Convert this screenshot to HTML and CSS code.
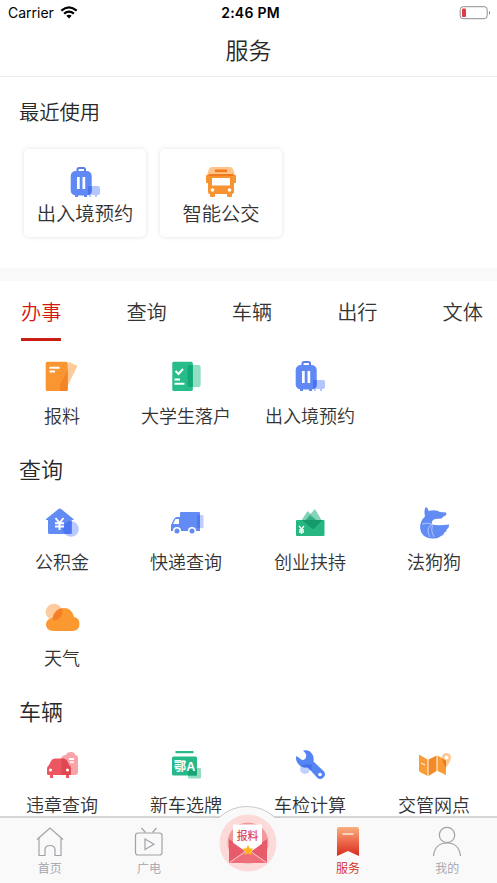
FILE: index.html
```html
<!DOCTYPE html>
<html lang="zh-CN">
<head>
<meta charset="utf-8">
<title>服务</title>
<link rel="stylesheet" href="styles.css">
</head>
<body>
<svg class="defs" width="0" height="0">
  <symbol id="luggage" viewBox="0 0 32 32">
    <rect x="17" y="20" width="14" height="9" rx="2" fill="#b3c6ff"/>
    <path d="M20 28h2v3h-2zM26 28h2v3h-2z" fill="#b3c6ff"/>
    <path d="M8.500 6V3.500Q8.500 2 10 2h4.500Q16 2 16 3.500V6" fill="none" stroke="#5b7fe8" stroke-width="2"/>
    <rect x="1.700" y="5" width="21" height="24.500" rx="5" fill="#6189f5"/>
    <path d="M6 28h3v3H6zM15 28h3v3h-3z" fill="#6189f5"/>
    <path d="M19 21q0-1 1-1h2.700v5q0 3-3.700 4z" fill="#4a72ec"/>
    <path d="M8 11h2.700v12H8zM13.500 11h2.700v12h-2.700z" fill="#fff"/>
  </symbol>
</svg>
<div class="screen">
  <header class="status">
    <div class="carrier">Carrier
      <svg width="18" height="13" viewBox="0 0 18 13" fill="none" stroke="#000" stroke-width="2.200"><path d="M1.300 4.700Q9-2 16.700 4.700M4.100 7.700q4.900-4 9.800 0"/><path d="M6.300 9.800Q9 7.700 11.700 9.800L9 12.500z" fill="#000" stroke="none"/></svg>
    </div>
    <time>2:46 PM</time>
    <svg width="32" height="14" viewBox="0 0 32 14"><rect x="1.200" y=".7" width="27" height="12" rx="3" fill="#fff" stroke="#8f8f8f"/><rect x="3" y="2.500" width="4" height="8.500" rx="1" fill="#e33b42"/><path d="M30 4.700q2 2 0 4z" fill="#777"/></svg>
  </header>
  <h1>服务</h1>

  <section class="recent">
    <h2>最近使用</h2>
    <div class="cards">
      <div class="card"><svg class="icon"><use href="#luggage"/></svg><span>出入境预约</span></div>
      <div class="card">
        <svg class="icon" viewBox="0 0 32 32">
          <path d="M7 1h18q2 0 3 2l2 6H2l2-6q1-2 3-2z" fill="#fdc38b"/>
          <path d="M10 3.500h12v2.700H10z" fill="#f07a1c"/>
          <path d="M1 10q0-1 1-1h28q1 0 1 1v7h-2v9q0 2-2 2v2q0 1-1 1h-3q-1 0-1-1v-2H10v2q0 1-1 1H6q-1 0-1-1v-2q-2 0-2-2v-9H1z" fill="#f79332"/>
          <path d="M4 8h24l1 2H3z" fill="#f07a1c"/><path d="M7 12h18v7.500H7z" fill="#fff"/>
          <circle cx="7.500" cy="24" r="1.800" fill="#fff"/><circle cx="24.500" cy="24" r="1.800" fill="#fff"/>
        </svg><span>智能公交</span></div>
    </div>
  </section>

  <nav class="tabs">
    <span class="active">办事</span><span>查询</span><span>车辆</span><span>出行</span><span>文体</span>
  </nav>

  <div class="grid first">
    <div class="item">
      <svg class="icon" viewBox="0 0 32 32">
        <path d="M23 1.700 31.500 6 19 31l-5-1z" fill="#fdcb9b"/>
        <rect x="-.3" y="1.700" width="22" height="29.300" rx="1.500" fill="#fa9632"/>
        <path d="M21.700 10v19.500q0 1.500-1.500 1.500H14q-.8-5 1.200-9z" fill="#f58428"/>
        <path d="M3.500 6.700h10v2h-10zM3.500 10.500h5.500v2H3.500z" fill="#fff"/>
      </svg><span>报料</span></div>
    <div class="item">
      <svg class="icon" viewBox="0 0 32 32">
        <rect x="16" y="5" width="14.700" height="22" rx="2" fill="#93dec5"/>
        <rect x="2.300" y="1.700" width="20.500" height="29.300" rx="1.500" fill="#26bd8b"/>
        <path d="M22.800 5v22H20q-2.500 0-2.500-3V8q0-3 2.500-3z" fill="#13a97a"/>
        <path d="m5.500 11 3 3 4.500-5" fill="none" stroke="#fff" stroke-width="2"/>
        <path d="M4.500 18.500H10v2H4.500zM4.500 22.700h10v2h-10z" fill="#fff"/>
      </svg><span>大学生落户</span></div>
    <div class="item"><svg class="icon"><use href="#luggage"/></svg><span>出入境预约</span></div>
  </div>

  <h3>查询</h3>
  <div class="grid">
    <div class="item">
      <svg class="icon" viewBox="0 0 32 32">
        <circle cx="25" cy="23" r="7.800" fill="#b8caff"/>
        <path d="M12.500 3q1.300-1 2.600 0L27.500 13v1H25.700V26.500q0 1.500-1.500 1.500H3.500Q2 28 2 26.500V14H0v-1z" fill="#628bf3"/>
        <path d="M25.700 15.200V26.500q0 1.500-1.500 1.500h-5.300a7.800 7.800 0 0 1 6.800-12.800z" fill="#4a76f2"/>
        <path d="m9.500 12 4 5 4-5M13.500 16.500V24M9 17.200h9M9 20.500h9" fill="none" stroke="#fff" stroke-width="1.900"/>
      </svg><span>公积金</span></div>
    <div class="item">
      <svg class="icon" viewBox="0 0 32 32">
        <rect x="25" y="9" width="8.500" height="13" rx="1" fill="#bccdff"/>
        <path d="M11 6h18q1 0 1 1v18H10V7q0-1 1-1zM10 11v14H1v-6l3-6q1-2 3-2z" fill="#628bf3"/>
        <path d="M27 9h3v13h-3z" fill="#4f79ee"/>
        <path d="M5.500 13H9v5H3z" fill="#fff"/>
        <g fill="#628bf3" stroke="#fff" stroke-width="1.600"><circle cx="7" cy="25" r="3.300"/><circle cx="22" cy="25" r="3.300"/></g>
      </svg><span>快递查询</span></div>
    <div class="item">
      <svg class="icon" viewBox="0 0 32 32">
        <path d="m7 15 6.500-10L25 16z" fill="#84d3b7"/><path d="M10 15 21 3l7 12z" fill="#68c9a8" opacity=".8"/><path d="m11 15 5-6 7 6z" fill="#3aac85"/>
        <rect x="2" y="14" width="28.500" height="16" rx="1" fill="#26b681"/>
        <path d="M8 14h20.500l-8.500 8.500q-1 1-2 0l-7-6z" fill="#159a6b"/>
        <path d="m5 20 2.500 3 2.500-3M7.500 22.500V28M5 24h5M5 26h5" stroke="#fff" stroke-width="1.300" fill="none"/>
      </svg><span>创业扶持</span></div>
    <div class="item">
      <svg class="icon" viewBox="0 0 32 32">
        <path d="M8 1Q10 2 10.500 5Q18 3 22 6L28 6.500Q29 8 27.500 9.500Q25.500 10 23.500 12.500L17 13Q13 14.500 14 18.500Q20 20 31.300 18.500Q31 22 28.500 23.500Q29 25.500 26.500 26.500Q26 29 23 30Q20 33 14 32.500Q6 32 3 26Q0 17 7 10.500Q5.500 4 8 1z" fill="#628bf3"/>
        <path d="M4 18q6-2 10 .5M14 18.500q-7 4-2 12.500M15 19.500q-3 4 1 11.500" fill="none" stroke="#c5d4ff" stroke-width=".8"/>
      </svg><span>法狗狗</span></div>
    <div class="item">
      <svg class="icon" viewBox="0 0 32 32">
        <circle cx="8" cy="10" r="8.300" fill="#fdcb9e"/>
        <path d="M7 29Q0 28 0 22.500T6.500 16Q9 6 17.500 6 26 6 28 15q5.500 1 5.500 7T27 29z" fill="#fb982f"/>
        <path d="M6.500 16Q8.500 7.800 16 6.200q1.500 6-2.500 10-3 2.500-6.500 2z" fill="#f57f29"/>
      </svg><span>天气</span></div>
  </div>

  <h3 class="vehicle">车辆</h3>
  <div class="grid">
    <div class="item">
      <svg class="icon" viewBox="0 0 32 32">
        <path d="M15 10q1-4 5-4 1-3 5-3t4 3q3 0 3 3v14q0 3-3 3H15z" fill="#f8a3a8"/>
        <path d="M5 12q1-2.500 4-2.500h8q3 0 4 2.500l2 4q2 1 2 4v5q0 1-1 1h-1v3h-3v-3H7v3H4v-3H2q-1 0-1-1v-5q0-3 2-4z" fill="#ec5660"/>
        <path d="M15.500 9.500H17q3 0 4 2.500l2 4q2 1 2 4v5q0 1-1 1h-8.500z" fill="#df4752"/>
        <circle cx="4.500" cy="21" r="1.500" fill="#fff"/><circle cx="21.500" cy="21" r="1.500" fill="#fff"/>
        <path d="M23 9h5v2h-5zM24 12.500h4V14h-4z" fill="#fff"/>
      </svg><span>违章查询</span></div>
    <div class="item">
      <svg class="icon" viewBox="0 0 32 32">
        <rect x="18" y="19" width="13" height="10.500" rx="1" fill="#92dcc4"/>
        <rect x="2" y="7.500" width="25" height="19" rx="1.500" fill="#28b98a"/><path d="M5.500 2h18v2.200h-18z" fill="#28b98a"/>
        <path d="M18 20h9v6.500h-9z" fill="#17a578"/>
        <text x="14.600" y="22" text-anchor="middle" class="plate">鄂A</text>
      </svg><span>新车选牌</span></div>
    <div class="item">
      <svg class="icon" viewBox="0 0 32 32">
        <circle cx="11" cy="20" r="5" fill="#c2d0ff"/>
        <path d="M9 1.500q7-1.500 10 5 1 3 .5 6l10 9.500q3 3 0 6.500-3.500 3-6.500 0L13.500 18Q6 20 2.500 12q-1-3 0-5l5.500 4q5 0 4-6z" fill="#5584f5"/>
        <path d="M7 17q4-3 11-1l-1 5.500-3.500-3Q10 19 7 17z" fill="#426fec"/>
        <circle cx="26" cy="25.500" r="1.800" fill="#fff"/>
      </svg><span>车检计算</span></div>
    <div class="item">
      <svg class="icon" viewBox="0 0 32 32">
        <path d="M28.500 4a4.500 4.500 0 0 0-4.500 4.500Q24 12 28.500 18 33 12 33 8.500A4.500 4.500 0 0 0 28.500 4zm0 2.500a2 2 0 1 1 0 4 2 2 0 0 1 0-4z" fill="#fdc78f"/>
        <path d="m1 5.500 8.500 5V27L2 23q-1-.5-1-2z" fill="#fa9c36"/><path d="m10.500 10.500 8-4V22l-8 5z" fill="#f68927"/><path d="m19.500 6.500 8.500 5V26l-8.500-4z" fill="#fa9c36"/>
        <path d="m24 9.500 4 2.500v7q-3-4-4-9.500z" fill="#ee7820"/>
        <path d="m3 14 4 2" stroke="#fff"/>
      </svg><span>交管网点</span></div>
  </div>

  <footer class="bar">
    <div class="tab"><svg class="tabicon" viewBox="0 0 32 32"><path d="M3 13.500 16 2l13 11.500M5 12v17.500h6V24q0-4.500 5-4.500t5 4.500v5.500h6V12"/></svg>首页</div>
    <div class="tab"><svg class="tabicon" viewBox="0 0 32 32"><rect x="2.500" y="7" width="26.500" height="22" rx="2.500"/><path d="m8.500 2 4 4.500M23.500 2l-4 4.500M12 13v10.500l9-5.200z"/></svg>广电</div>
    <div class="tab center">
      <svg class="report" viewBox="0 0 90 77">
        <path d="M16 11.500Q28 .5 44 .5T72 11.500V77H16z" fill="#f9f9f9"/><path d="M10 11.500h6Q28 .5 44 .5t28 11h6" fill="none" stroke="#c9c9c9"/>
        <circle cx="45" cy="37" r="28.500" fill="#fcdad9"/><circle cx="45" cy="37" r="20.500" fill="#f0999b"/>
        <path d="m26 33 19 13 19-13v24H26z" fill="#e75b6b"/>
        <path d="M30 18.500h29v20L45 48l-15-9z" fill="#fff"/>
        <path d="m26 57 19-13 19 13z" fill="#ee6e7a"/><path d="M26 34v23l16-12zM64 34v23L49 45z" fill="#e75b6b"/>
        <path d="m26.500 56.500 16-11M63.500 56.500l-16-11" stroke="#ffd0d1"/>
        <path d="m45 39 1.700 3.300 3.800.5-2.700 2.600.6 3.700-3.400-1.700-3.400 1.700.6-3.700-2.700-2.600 3.800-.5z" fill="#ffb51d"/>
        <text x="44.500" y="34" text-anchor="middle" class="reporttext">报料</text>
      </svg>
    </div>
    <div class="tab selected"><svg class="tabicon" viewBox="0 0 32 32"><defs><linearGradient id="red" x2="0" y2="1"><stop stop-color="#f9b07d"/><stop offset=".5" stop-color="#ed694b"/><stop offset="1" stop-color="#d82b20"/></linearGradient></defs><path d="M5 3q0-2 2-2h18q2 0 2 2v27L16 25 5 30z" fill="url(#red)" stroke="none"/><path d="M10.500 8h11" stroke="#fff"/></svg>服务</div>
    <div class="tab"><svg class="tabicon" viewBox="0 0 32 32"><circle cx="16" cy="9" r="7.700"/><path d="M2.500 30Q4 17 16 17t13.500 13"/></svg>我的</div>
  </footer>
</div>
</body>
</html>
```
FILE: styles.css
```css
* { box-sizing: border-box; }
body { margin: 0; background: #fff; color: #333; font-family: Inter, "Noto Sans CJK SC", sans-serif; font-weight: 350; }
.defs { display: none; }
.screen { width: 497px; height: 883px; overflow: hidden; display: flex; flex-direction: column; position: relative; }
.screen > * { flex-shrink: 0; }
.status { height: 26px; padding: 0 6px 0 8px; display: grid; grid-template-columns: 1fr auto 1fr; align-items: center; color: #000; font-size: 14px; }
.carrier { display: flex; align-items: center; gap: 6px; font-size: 14px; font-weight: 400; line-height: 26px; }
.carrier svg { margin-bottom: 2px; }
.status time { font-weight: 600; padding-left: 2px; letter-spacing: .25px; line-height: 26px; }
.status > svg { justify-self: end; margin-bottom: 1px; }
h1, h2, h3 { margin: 0; font-weight: 350; color: #282828; }
h1 { height: 51px; border-bottom: 1px solid #ececec; text-align: center; font-size: 23px; line-height: 51px; }
.recent { height: 204px; border-bottom: 13px solid #f9f9f9; padding: 18px 0 0 19px; }
h2 { font-size: 20.300px; line-height: 36px; }
.cards { display: flex; gap: 14px; padding: 18px 0 0 5px; }
.card { width: 122px; height: 88px; border-radius: 5px; box-shadow: 0 0 5px rgba(0,0,0,.12); display: flex; flex-direction: column; align-items: center; padding-top: 17px; font-size: 19.300px; line-height: 33px; }
.icon { width: 32px; height: 32px; overflow: visible; display: block; }
.tabs { height: 61px; display: flex; justify-content: space-between; padding: 0 14px 0 21px; font-size: 20.200px; line-height: 63px; }
.tabs span { height: 60px; }
.tabs .active { color: #d4180f; border-bottom: 3px solid #ca1d14; }
.grid { width: 496px; display: grid; grid-template-columns: repeat(4, 124px); grid-auto-rows: 96px; }
.grid.first { padding-top: 18px; grid-auto-rows: 88px; }
.item { display: flex; flex-direction: column; align-items: center; font-size: 18px; line-height: 32px; white-space: nowrap; }
.item span { margin-top: 9px; }
h3 { font-size: 22px; line-height: 40px; height: 58px; padding-left: 19px; padding-top: 2px; }
h3.vehicle { height: 57px; margin-top: -6px; padding-top: 0; }
.bar { position: absolute; left: 0; right: 0; bottom: 0; height: 67px; border-top: 2px solid #d6d6d6; background: #f9f9f9; display: grid; grid-template-columns: repeat(5, 1fr); }
.tab { display: flex; flex-direction: column; align-items: center; padding-top: 8px; font-size: 12px; line-height: 20px; color: #a2a2ac; }
.tabicon { width: 32px; height: 32px; fill: none; stroke: #a1a1a8; stroke-width: 1.200; margin-bottom: 1px; }
.selected { color: #d62820; }
.center { padding: 0; }
.report { width: 90px; height: 77px; margin-top: -12px; }
.plate { font: 700 12.500px "Liberation Sans", "Noto Sans CJK SC", sans-serif; fill: #fff; }
.reporttext { font: 500 10.800px "Noto Sans CJK SC", sans-serif; fill: #e04655; }
```
